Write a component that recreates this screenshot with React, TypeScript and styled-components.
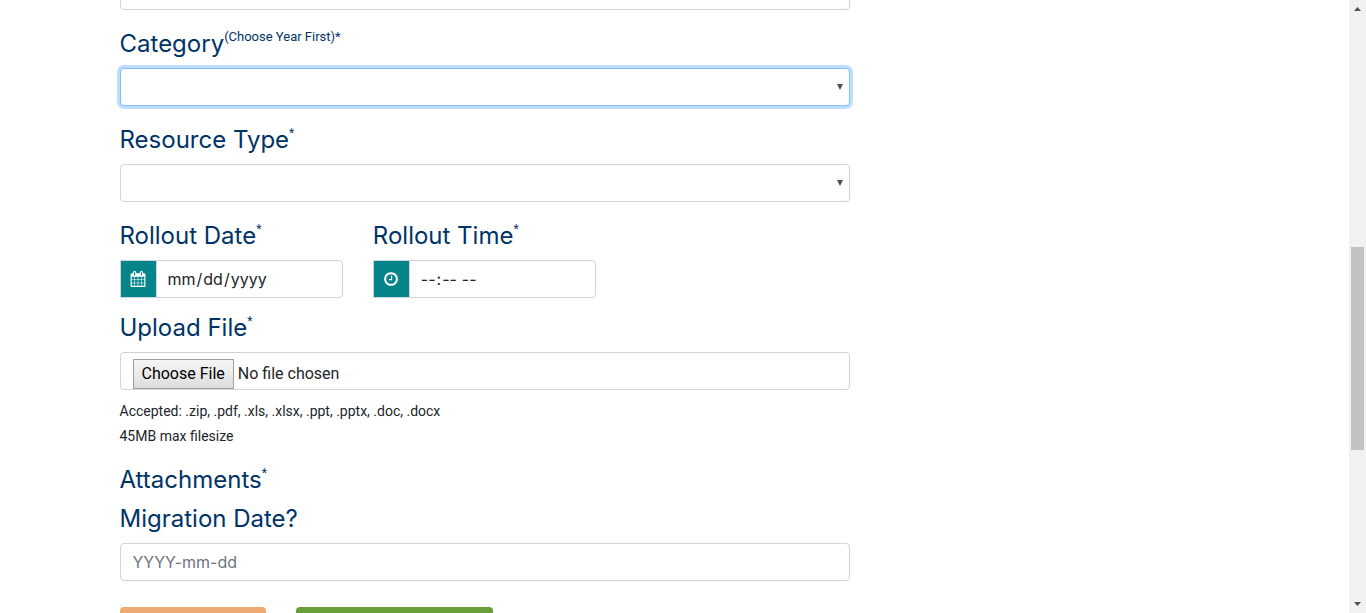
import React from "react";
import styled, { createGlobalStyle, css } from "styled-components";

const GlobalStyle = createGlobalStyle`
  *, *::before, *::after { box-sizing: border-box; }
  body {
    margin: 0;
    background: #fff;
    color: #212529;
    font-family: Inter, "Liberation Sans", sans-serif;
    font-size: 16px;
    line-height: 24px;
  }
`;

const Page = styled.div`
  display: flex;
  height: 100vh;
  overflow: hidden;
`;

const Content = styled.main`
  flex: 1;
  min-width: 0;
  overflow-y: auto;
  scrollbar-width: none;
`;

const Container = styled.div`
  max-width: 1140px;
  margin: 0 auto;
`;

const Form = styled.form`
  width: 66.6667%;
  min-width: 320px;
  padding: 0 15px 30px;
  margin-top: -28px;
`;

const Group = styled.div<{ $gap?: number }>`
  flex: 1;
  margin-bottom: ${(p) => p.$gap ?? 16}px;
`;

const Row = styled.div`
  display: grid;
  grid-template-columns: repeat(3, 1fr);
  column-gap: 30px;
`;

const labelText = css`
  display: block;
  margin: 0 0 6px;
  color: #003366;
  font-size: 24px;
  font-weight: 400;
  line-height: 36px;
  white-space: nowrap;
`;

const Label = styled.label`
  ${labelText}
`;

const Heading = styled.h2`
  ${labelText}
  margin-bottom: 3px;
`;

const Mark = styled.sup<{ $note?: boolean }>`
  font-family: Roboto, "Liberation Sans", sans-serif;
  font-size: ${(p) => (p.$note ? 13 : 12)}px;
  line-height: 0;
  vertical-align: 11px;
`;

const control = css`
  display: block;
  width: 100%;
  height: 38px;
  padding: 6px 12px;
  border: 1px solid #ced4da;
  border-radius: 4px;
  background: #fff;
  color: #212529;
  font: inherit;
  outline: none;
`;

const TextInput = styled.input`
  ${control}
  &::placeholder { color: #6c757d; opacity: 1; }
`;

const SelectBox = styled.div`
  position: relative;
  &::after {
    content: "";
    position: absolute;
    top: 16px;
    right: 7px;
    border: solid transparent;
    border-width: 6px 3px 0;
    border-top-color: #495057;
    pointer-events: none;
  }
`;

const Select = styled.select<{ $active?: boolean }>`
  ${control}
  appearance: none;
  ${(p) =>
    p.$active &&
    css`
      border-color: #80bdff;
      box-shadow: 0 0 0 3px #bfdeff;
    `}
`;

const InputGroup = styled.div`
  display: flex;
  height: 38px;
`;

const Addon = styled.span`
  display: flex;
  flex: none;
  align-items: center;
  justify-content: center;
  width: 36px;
  border: 1px solid #ced4da;
  border-right: 0;
  background: #058489;
  color: #fff;
`;

const PickerInput = styled.input`
  ${control}
  flex: 1;
  min-width: 0;
  padding: 6px 10px;
  border-radius: 0 4px 4px 0;
  &::-webkit-calendar-picker-indicator { display: none; }
`;

const FileInput = styled.input`
  ${control}
  font-family: Roboto, "Liberation Sans", sans-serif;
  &::file-selector-button {
    height: 30px;
    margin: 0 4px 0 0;
    padding: 1px 8px;
    border: 1px solid #a0a0a0;
    border-radius: 0;
    background: linear-gradient(#f6f6f6, #dddddd);
    color: #000;
    font: inherit;
  }
`;

const Help = styled.p`
  margin: 9px 0 13px;
  font-family: Roboto, "Liberation Sans", sans-serif;
  font-size: 14px;
  line-height: 25px;
`;

const Actions = styled.div`
  display: flex;
  gap: 30px;
  margin-top: 26px;
`;

const Button = styled.button<{ $color: string; $width: number }>`
  width: ${(p) => p.$width}px;
  height: 38px;
  border: 0;
  border-radius: 4px;
  background: ${(p) => p.$color};
`;

const Scrollbar = styled.div`
  display: flex;
  flex: none;
  flex-direction: column;
  width: 17px;
  padding: 0 2px;
  background: #f1f1f1;
`;

const Arrow = styled.svg`
  flex: none;
  width: 13px;
  height: 17px;
  fill: #505050;
`;

const Track = styled.div<{ $grow: number; $thumb?: boolean }>`
  flex: ${(p) => p.$grow} 0 0;
  background: ${(p) => (p.$thumb ? "#c1c1c1" : "transparent")};
`;

const CalendarIcon = () => (
  <svg width="16" height="16" viewBox="0 0 1792 1792" fill="currentColor" aria-hidden="true">
    <path d="M192 1664h288v-288h-288v288zM544 1664h320v-288h-320v288zM192 1312h288v-320h-288v320zM544 1312h320v-320h-320v320zM192 928h288v-288h-288v288zM928 1664h320v-288h-320v288zM544 928h320v-288h-320v288zM1312 1664h288v-288h-288v288zM928 1312h320v-320h-320v320zM576 448v-288q0-13-9.5-22.5t-22.5-9.5h-64q-13 0-22.5 9.5t-9.5 22.5v288q0 13 9.5 22.5t22.5 9.5h64q13 0 22.5-9.5t9.5-22.5zM1312 1312h288v-320h-288v320zM928 928h320v-288h-320v288zM1312 928h288v-288h-288v288zM1344 448v-288q0-13-9.5-22.5t-22.5-9.5h-64q-13 0-22.5 9.5t-9.5 22.5v288q0 13 9.5 22.5t22.5 9.5h64q13 0 22.5-9.5t9.5-22.5zM1728 384v1280q0 52-38 90t-90 38h-1408q-52 0-90-38t-38-90v-1280q0-52 38-90t90-38h128v-96q0-66 47-113t113-47h64q66 0 113 47t47 113v96h384v-96q0-66 47-113t113-47h64q66 0 113 47t47 113v96h128q52 0 90 38t38 90z" />
  </svg>
);

const ClockIcon = () => (
  <svg width="16" height="16" viewBox="0 0 1792 1792" fill="currentColor" aria-hidden="true">
    <path d="M1024 544v448q0 14-9 23t-23 9h-320q-14 0-23-9t-9-23v-64q0-14 9-23t23-9h224v-352q0-14 9-23t23-9h64q14 0 23 9t9 23zm416 352q0-148-73-273t-198-198-273-73-273 73-198 198-73 273 73 273 198 198 273 73 273-73 198-198 73-273zm224 0q0 209-103 385.5t-279.5 279.5-385.5 103-385.5-103-279.5-279.5-103-385.5 103-385.5 279.5-279.5 385.5-103 385.5 103 279.5 279.5 103 385.5z" />
  </svg>
);

export default function App() {
  return (
    <>
      <GlobalStyle />
      <Page>
        <Content>
          <Container>
            <Form onSubmit={(e) => e.preventDefault()}>
              <Group>
                <TextInput type="text" aria-label="Year" />
              </Group>
              <Group>
                <Label htmlFor="category">
                  Category<Mark $note>(Choose Year First)*</Mark>
                </Label>
                <SelectBox>
                  <Select id="category" $active />
                </SelectBox>
              </Group>
              <Group>
                <Label htmlFor="resource-type">
                  Resource Type<Mark>*</Mark>
                </Label>
                <SelectBox>
                  <Select id="resource-type" />
                </SelectBox>
              </Group>
              <Row>
                <Group $gap={12}>
                  <Label htmlFor="rollout-date">
                    Rollout Date<Mark>*</Mark>
                  </Label>
                  <InputGroup>
                    <Addon><CalendarIcon /></Addon>
                    <PickerInput id="rollout-date" type="date" />
                  </InputGroup>
                </Group>
                <Group $gap={12}>
                  <Label htmlFor="rollout-time">
                    Rollout Time<Mark>*</Mark>
                  </Label>
                  <InputGroup>
                    <Addon><ClockIcon /></Addon>
                    <PickerInput id="rollout-time" type="time" />
                  </InputGroup>
                </Group>
              </Row>
              <Label htmlFor="upload">
                Upload File<Mark>*</Mark>
              </Label>
              <FileInput id="upload" type="file" />
              <Help>
                Accepted: .zip, .pdf, .xls, .xlsx, .ppt, .pptx, .doc, .docx
                <br />
                45MB max filesize
              </Help>
              <Heading>
                Attachments<Mark>*</Mark>
              </Heading>
              <Label htmlFor="migration-date">Migration Date?</Label>
              <TextInput id="migration-date" type="text" placeholder="YYYY-mm-dd" />
              <Actions>
                <Button type="button" aria-label="Cancel" $color="#efa973" $width={146} />
                <Button type="submit" aria-label="Submit" $color="#689f38" $width={197} />
              </Actions>
            </Form>
          </Container>
        </Content>
        <Scrollbar aria-hidden="true">
          <Arrow viewBox="0 0 13 17"><path d="M3 11h7L6.500 7z" /></Arrow>
          <Track $grow={230} />
          <Track $grow={203} $thumb />
          <Track $grow={146} />
          <Arrow viewBox="0 0 13 17"><path d="M3 6h7L6.500 10z" /></Arrow>
        </Scrollbar>
      </Page>
    </>
  );
}
